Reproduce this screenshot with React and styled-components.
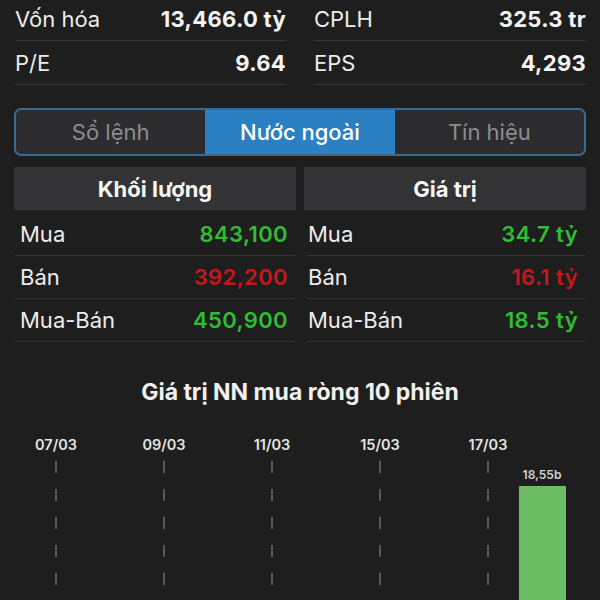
import React from "react";
import styled, { createGlobalStyle } from "styled-components";

const GlobalStyle = createGlobalStyle`
  html, body { margin: 0; padding: 0; background: #1e1e1e; }
  body { font-family: Inter, "Noto Sans", "Liberation Sans", sans-serif; color: #f2f2f2; }
  * { box-sizing: border-box; }
`;

const Page = styled.div`
  width: 600px;
  height: 600px;
  overflow: hidden;
  background: #1e1e1e;
`;

const StatGrid = styled.div`
  display: grid;
  grid-template-columns: 271px 272px;
  column-gap: 28px;
  padding: 0 14px 0 15px;
  margin-top: -3px;
`;

const StatRow = styled.div`
  height: 44px;
  border-bottom: 1px solid #37373a;
  display: flex;
  align-items: center;
  justify-content: space-between;
  font-size: 22px;
`;

const StatLabel = styled.span`
  color: #ececec;
  font-weight: 400;
`;

const StatValue = styled.span`
  color: #f4f4f4;
  font-weight: 700;
  letter-spacing: 0.3px;
`;

const Tabs = styled.div`
  margin: 23px 14px 0 14px;
  height: 48px;
  border: 2px solid #3a6a90;
  border-radius: 7px;
  overflow: hidden;
  background: #2c2c2e;
  display: grid;
  grid-template-columns: 1fr 1fr 1fr;
`;

const Tab = styled.div`
  display: flex;
  align-items: center;
  justify-content: center;
  font-size: 22px;
  color: ${(p) => (p.$active ? "#ffffff" : "#8c8c8e")};
  background: ${(p) => (p.$active ? "#2a80c3" : "transparent")};
  font-weight: ${(p) => (p.$active ? 500 : 400)};
`;

const TwoCols = styled.div`
  display: grid;
  grid-template-columns: 282px 282px;
  column-gap: 8px;
  padding: 0 14px;
  margin-top: ${(p) => p.$mt || 0}px;
`;

const HeaderCell = styled.div`
  height: 43px;
  background: #333335;
  display: flex;
  align-items: center;
  justify-content: center;
  font-size: 22px;
  font-weight: 700;
  color: #f6f6f6;
`;

const DataCol = styled.div`
  display: flex;
  flex-direction: column;
`;

const DataRow = styled.div`
  height: 43px;
  margin: 0 1px 0 ${(p) => p.$ml || 1}px;
  border-bottom: 1px solid #343436;
  display: flex;
  align-items: center;
  justify-content: space-between;
  padding: 0 7px 0 ${(p) => p.$pl || 5}px;
  font-size: 22px;
`;

const DataLabel = styled.span`
  color: #ececec;
`;

const DataValue = styled.span`
  font-weight: 600;
  letter-spacing: 0.4px;
  color: ${(p) => (p.$tone === "down" ? "#c8161d" : "#2fbd33")};
`;

const ChartTitle = styled.div`
  margin-top: 37px;
  text-align: center;
  font-size: 23px;
  line-height: 26px;
  font-weight: 700;
  color: #f0f0f0;
`;

const Chart = styled.div`
  margin-top: 31px;
  padding-left: 29px;
  display: grid;
  grid-template-columns: repeat(10, 54px);
`;

const Column = styled.div`
  display: flex;
  flex-direction: column;
  align-items: center;
`;

const DateLabel = styled.div`
  height: 18px;
  line-height: 18px;
  font-size: 14.5px;
  font-weight: 600;
  color: #e4e4e4;
  white-space: nowrap;
`;

const DashLine = styled.div`
  margin-top: 7px;
  width: 2px;
  height: 200px;
  background: repeating-linear-gradient(
    to bottom,
    #575757 0 12px,
    transparent 12px 28px
  );
`;

const BarValue = styled.div`
  margin-top: 15px;
  font-size: 12px;
  line-height: 12px;
  font-weight: 600;
  color: #d2d2d2;
`;

const Bar = styled.div`
  margin-top: 5px;
  width: 47px;
  height: 200px;
  background: #6cbe64;
  border-radius: 1px 1px 0 0;
`;

const stats = [
  [
    ["Vốn hóa", "13,466.0 tỷ"],
    ["P/E", "9.64"],
  ],
  [
    ["CPLH", "325.3 tr"],
    ["EPS", "4,293"],
  ],
];

const volume = [
  ["Mua", "843,100", "up"],
  ["Bán", "392,200", "down"],
  ["Mua-Bán", "450,900", "up"],
];

const value = [
  ["Mua", "34.7 tỷ", "up"],
  ["Bán", "16.1 tỷ", "down"],
  ["Mua-Bán", "18.5 tỷ", "up"],
];

const sessions = [
  "07/03", "", "09/03", "", "11/03", "", "15/03", "", "17/03", "",
];

export default function App() {
  return (
    <>
      <GlobalStyle />
      <Page>
        <StatGrid>
          {stats.map((col, i) => (
            <div key={i}>
              {col.map(([l, v]) => (
                <StatRow key={l}>
                  <StatLabel>{l}</StatLabel>
                  <StatValue>{v}</StatValue>
                </StatRow>
              ))}
            </div>
          ))}
        </StatGrid>

        <Tabs>
          <Tab>Sổ lệnh</Tab>
          <Tab $active>Nước ngoài</Tab>
          <Tab>Tín hiệu</Tab>
        </Tabs>

        <TwoCols $mt={11}>
          <HeaderCell>Khối lượng</HeaderCell>
          <HeaderCell>Giá trị</HeaderCell>
        </TwoCols>

        <TwoCols $mt={3}>
          <DataCol>
            {volume.map(([l, v, t]) => (
              <DataRow key={l} $pl={5}>
                <DataLabel>{l}</DataLabel>
                <DataValue $tone={t}>{v}</DataValue>
              </DataRow>
            ))}
          </DataCol>
          <DataCol>
            {value.map(([l, v, t]) => (
              <DataRow key={l} $ml={3} $pl={1}>
                <DataLabel>{l}</DataLabel>
                <DataValue $tone={t}>{v}</DataValue>
              </DataRow>
            ))}
          </DataCol>
        </TwoCols>

        <ChartTitle>Giá trị NN mua ròng 10 phiên</ChartTitle>

        <Chart>
          {sessions.map((d, i) => (
            <Column key={i}>
              <DateLabel>{d}</DateLabel>
              {d && <DashLine />}
              {i === 9 && (
                <>
                  <BarValue>18,55b</BarValue>
                  <Bar />
                </>
              )}
            </Column>
          ))}
        </Chart>
      </Page>
    </>
  );
}
